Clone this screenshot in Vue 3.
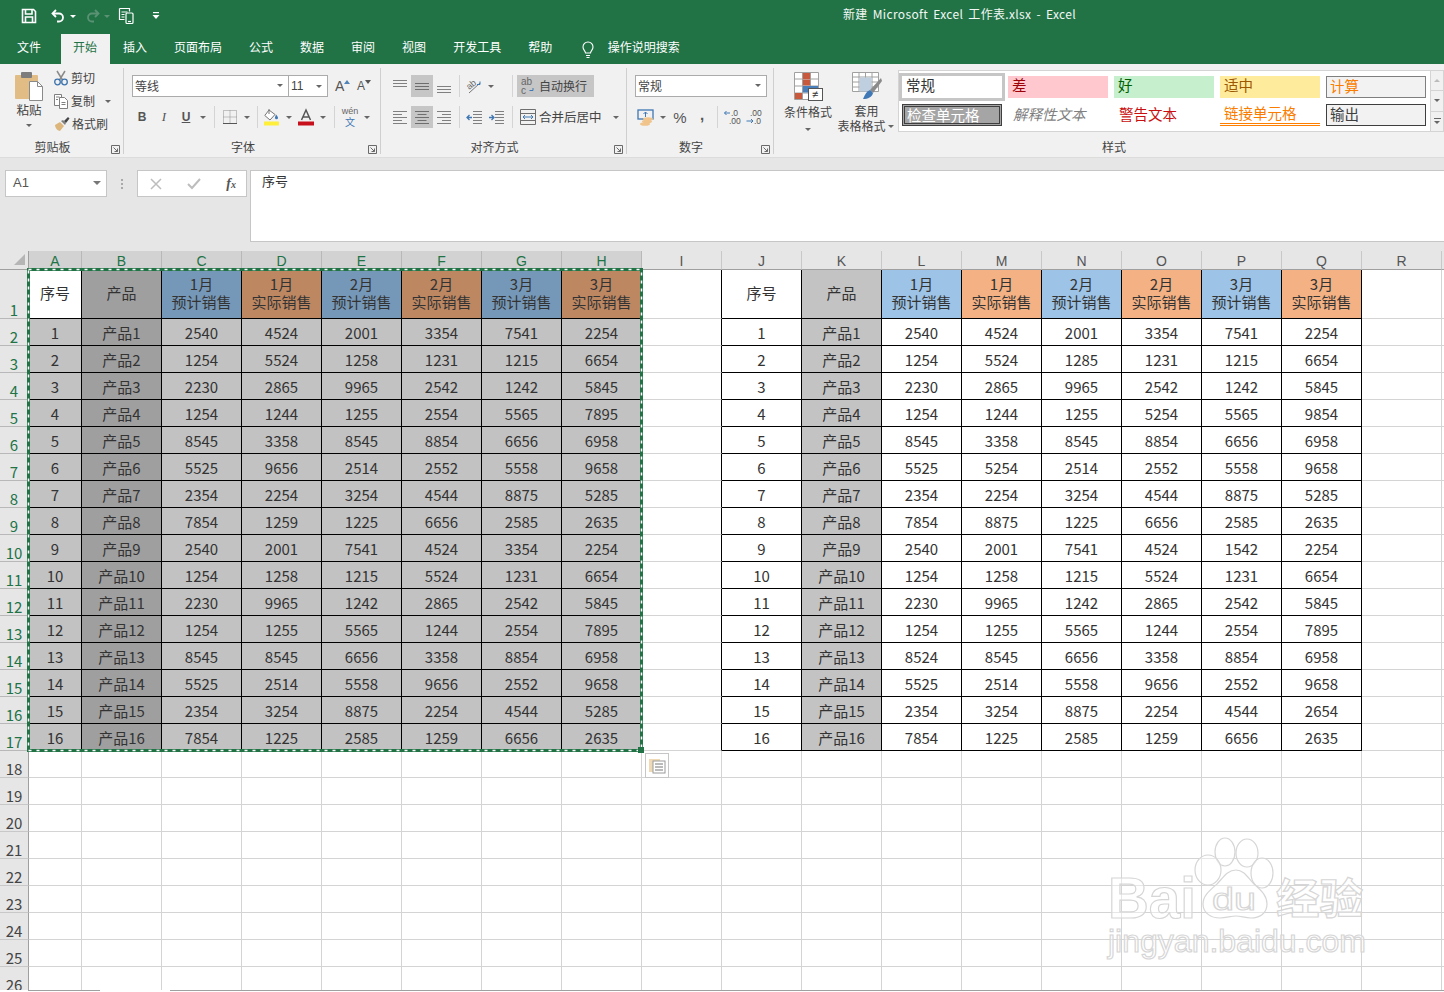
<script setup>
const letters = 'ABCDEFGHIJKLMNOPQR'.split('').concat('')
const left = `2540 4524 2001 3354 7541 2254
1254 5524 1258 1231 1215 6654
2230 2865 9965 2542 1242 5845
1254 1244 1255 2554 5565 7895
8545 3358 8545 8854 6656 6958
5525 9656 2514 2552 5558 9658
2354 2254 3254 4544 8875 5285
7854 1259 1225 6656 2585 2635
2540 2001 7541 4524 3354 2254
1254 1258 1215 5524 1231 6654
2230 9965 1242 2865 2542 5845
1254 1255 5565 1244 2554 7895
8545 8545 6656 3358 8854 6958
5525 2514 5558 9656 2552 9658
2354 3254 8875 2254 4544 5285
7854 1225 2585 1259 6656 2635`.split('\n').map(r => r.split(' '))
const right = `2540 4524 2001 3354 7541 2254
1254 5524 1285 1231 1215 6654
2230 2865 9965 2542 1242 5845
1254 1244 1255 5254 5565 9854
8545 3358 8545 8854 6656 6958
5525 5254 2514 2552 5558 9658
2354 2254 3254 4544 8875 5285
7854 8875 1225 6656 2585 2635
2540 2001 7541 4524 1542 2254
1254 1258 1215 5524 1231 6654
2230 9965 1242 2865 2542 5845
1254 1255 5565 1244 2554 7895
8524 8545 6656 3358 8854 6958
5525 2514 5558 9656 2552 9658
2354 3254 8875 2254 4544 2654
7854 1225 2585 1259 6656 2635`.split('\n').map(r => r.split(' '))
const heads = ['序号', '产品', '1月\n预计销售', '1月\n实际销售', '2月\n预计销售', '2月\n实际销售', '3月\n预计销售', '3月\n实际销售']

function tableCells(data, r) {
  if (r === 1) return heads
  const i = r - 2
  return [String(i + 1), '产品' + (i + 1), ...data[i]]
}
function bg(c, r) {
  if (r > 17) return ''
  if (c < 8) {
    if (r === 1) return c === 0 ? 'w' : c === 1 ? 'lgb' : c % 2 ? 'lorange' : 'lblue'
    return c === 1 ? 'lgb' : 'lg'
  }
  if (c > 8 && c < 17) {
    const k = c - 9
    if (k === 1) return 'rg'
    if (r === 1 && k > 1) return k % 2 ? 'rorange' : 'rblue'
  }
  return ''
}
const rows = Array.from({ length: 26 }, (_, idx) => {
  const n = idx + 1
  const cells = letters.map((_, c) => {
    const inTable = n <= 17 && ((c >= 0 && c < 8) || (c >= 9 && c < 17))
    let text = ''
    if (n <= 17 && c < 8) text = tableCells(left, n)[c]
    if (n <= 17 && c >= 9 && c < 17) text = tableCells(right, n)[c - 9]
    return {
      text,
      cls: [bg(c, n), inTable ? 'blk' : '', n <= 17 && c === 8 ? 'blkr' : '', n === 1 ? 'head' : ''],
    }
  })
  return { n, cells }
})
</script>

<template>
  <div class="page">
    <header class="top">
      <div class="qat">
        <svg class="q-save" width="18" height="18" viewBox="0 0 18 18" fill="none" stroke="#fff" stroke-width="1.6"><path d="M2.500 2.500h11l2 2v11h-13z"/><path d="M5.500 3v4h6.500V3M5.500 15v-5h7v5"/></svg>
        <svg class="q-undo" width="16" height="16" viewBox="0 0 16 16" fill="none" stroke="#fff" stroke-width="1.8"><path d="M6 2 2.500 5.500 6 9"/><path d="M3 5.500h6a4 4 0 0 1 0 8H7"/></svg>
        <span class="tri-w q-c1"></span>
        <svg class="q-redo" width="16" height="16" viewBox="0 0 16 16" fill="none" stroke="#5b9274" stroke-width="1.8"><path d="M10 2l3.500 3.500L10 9"/><path d="M13 5.500H7a4 4 0 0 0 0 8h2"/></svg>
        <span class="tri-d q-c2"></span>
        <svg class="q-prev" width="18" height="18" viewBox="0 0 18 18" fill="none" stroke="#fff" stroke-width="1.2"><path d="M1.500 1.500h10v3M1.500 1.500v11h5M3.500 5h6M3.500 7.500h3M3.500 10h3"/><rect x="8" y="6" width="7" height="10.500" rx="1" fill="#217346"/><path d="M10 14.500h3"/></svg>
        <svg class="q-cust" width="8" height="8" viewBox="0 0 8 8" fill="#fff"><rect x="1" y="0" width="6" height="1.200"/><path d="M0.500 3h7L4 7z"/></svg>
        <span class="title">新建 Microsoft Excel 工作表.xlsx  -  Excel</span>
      </div>
      <nav class="tabs">
        <span class="tab">文件</span>
        <span class="tab active">开始</span>
        <span class="tab">插入</span>
        <span class="tab">页面布局</span>
        <span class="tab">公式</span>
        <span class="tab">数据</span>
        <span class="tab">审阅</span>
        <span class="tab">视图</span>
        <span class="tab">开发工具</span>
        <span class="tab">帮助</span>
        <span class="tell">
          <svg width="16" height="18" viewBox="0 0 16 18" fill="none" stroke="#fff" stroke-width="1.100"><path d="M5.500 12c0-2-2.500-3-2.500-6a5 5 0 0 1 10 0c0 3-2.500 4-2.500 6z"/><path d="M6 14.500h4M6.500 16.500h3"/></svg>
          <span>操作说明搜索</span>
        </span>
      </nav>
    </header>

    <section class="ribbon">
      <!-- 剪贴板 -->
      <div class="group g-clip">
        <div class="body clip-body">
          <div class="paste">
            <svg width="30" height="30" viewBox="0 0 30 30">
              <rect x="1" y="4" width="23" height="24" rx="1" fill="#e1bd85"/>
              <rect x="7" y="1" width="11" height="6" rx="1" fill="#7d7d7d"/>
              <path d="M15.500 10.500h8l5 5v14h-13z" fill="#fff" stroke="#8a8a8a"/>
              <path d="M23.500 10.500v5h5" fill="none" stroke="#8a8a8a"/>
            </svg>
            <span class="paste-t">粘贴</span>
            <span class="tri-g paste-c"></span>
          </div>
          <div class="clip-list">
            <div class="clip-row">
              <svg width="16" height="16" viewBox="0 0 16 16" fill="none"><path d="M4 1l5.500 9M12 1 6.500 10" stroke="#8a8a8a" stroke-width="1.500"/><circle cx="4.500" cy="12" r="2.800" stroke="#3e74ad" stroke-width="1.300"/><circle cx="11.500" cy="12" r="2.800" stroke="#3e74ad" stroke-width="1.300"/></svg>
              <span>剪切</span>
            </div>
            <div class="clip-row">
              <svg width="16" height="16" viewBox="0 0 16 16" fill="#fff" stroke="#7f7f7f"><path d="M1.500 1.500h7v11h-7z"/><path d="M6.500 4.500h5l3 3v8h-8z"/><path d="M8.500 9.500h4M8.500 11.500h4M3 4h3.500M3 6.500h2" fill="none"/></svg>
              <span>复制</span><span class="tri-g copy-c"></span>
            </div>
            <div class="clip-row">
              <svg width="17" height="16" viewBox="0 0 17 16"><path d="M2 9l5-3 4 4-4 5C5 15 2 12 2 9z" fill="#dcb67c"/><path d="M8 5l2-1 3 3-1 2z" fill="#7f7f7f"/><path d="M11 5l4-4 1.500 1.500L13 7z" fill="#444"/></svg>
              <span>格式刷</span>
            </div>
          </div>
        </div>
        <div class="g-label"><span></span><span>剪贴板</span><svg class="launch" width="9" height="9" viewBox="0 0 9 9" fill="none" stroke="#6a6a6a"><path d="M0.500 8.500v-8h8v8z"/><path d="M2.500 2.500l4 4M6.500 3.500v3h-3"/></svg></div>
      </div>

      <!-- 字体 -->
      <div class="group g-font">
        <div class="body font-body">
          <div class="r1 font-r1">
            <div class="field f-name"><span>等线</span><span class="tri-g"></span></div>
            <div class="field f-size"><span>11</span><span class="tri-g"></span></div>
            <span class="grow">A<svg width="6" height="4" viewBox="0 0 6 4"><path d="M0 4h6L3 0z" fill="#4e82b8"/></svg></span>
            <span class="shrink">A<svg width="6" height="4" viewBox="0 0 6 4"><path d="M0 0h6L3 4z" fill="#555"/></svg></span>
          </div>
          <div class="r2 font-r2">
            <span class="ico t-b">B</span>
            <span class="ico t-i">I</span>
            <span class="ico t-u">U</span>
            <span class="cw"><span class="tri-g"></span></span>
            <span class="sep s10"></span>
            <span class="ico"><svg width="16" height="16" viewBox="0 0 16 16" fill="none" stroke="#8f8f8f" stroke-dasharray="1 1"><path d="M1.500 1.500h13v13h-13zM8 1.500v13M1.500 8h13"/><path d="M1 14.500h14" stroke="#555" stroke-dasharray="none"/></svg></span>
            <span class="cw"><span class="tri-g"></span></span>
            <span class="sep s8"></span>
            <span class="ico"><svg width="18" height="18" viewBox="0 0 18 18"><path d="M6 2 1.800 7.500 7 12l5-5.500z" fill="#fff" stroke="#777"/><path d="M6 1v5" stroke="#777"/><path d="M13 6.500c1.300 1.500 2 2.500 2 3.300a1.500 1.500 0 0 1-3 0c0-.8.500-1.800 1-3.300z" fill="#3f78b5"/><rect x="1" y="13.500" width="15" height="4" fill="#ffef3a"/></svg></span>
            <span class="cw"><span class="tri-g"></span></span>
            <span class="ico"><svg width="18" height="18" viewBox="0 0 18 18" fill="none"><path d="M4.500 12 9 2l4.500 10M6 9h6" stroke="#555" stroke-width="1.500"/><rect x="1" y="13.500" width="16" height="4" fill="#c8101c"/></svg></span>
            <span class="cw"><span class="tri-g"></span></span>
            <span class="sep s10"></span>
            <span class="ico wen"><span class="wen-a">wén</span><span class="wen-b">文</span></span>
            <span class="cw"><span class="tri-g"></span></span>
          </div>
        </div>
        <div class="g-label"><span></span><span>字体</span><svg class="launch" width="9" height="9" viewBox="0 0 9 9" fill="none" stroke="#6a6a6a"><path d="M0.500 8.500v-8h8v8z"/><path d="M2.500 2.500l4 4M6.500 3.500v3h-3"/></svg></div>
      </div>

      <!-- 对齐方式 -->
      <div class="group g-align">
        <div class="body align-body">
          <div class="r1 al-r">
            <span class="ico"><svg width="16" height="16" viewBox="0 0 16 16" stroke="#808080"><path d="M1 2.500h14M1 5.500h14M1 8.500h14"/></svg></span>
            <span class="ico on"><svg width="16" height="16" viewBox="0 0 16 16" stroke="#6e6e6e"><path d="M1 5.500h14M1 8.500h14M1 11.500h14"/></svg></span>
            <span class="ico"><svg width="16" height="16" viewBox="0 0 16 16" stroke="#808080"><path d="M1 8.500h14M1 11.500h14M1 14.500h14"/></svg></span>
            <span class="sep s8"></span>
            <span class="ico"><svg width="20" height="18" viewBox="0 0 20 18" fill="none"><text x="3" y="11" transform="rotate(-40 7 9)" class="svg-t">ab</text><path d="M5 16 16 6" stroke="#777"/><path d="M16 4.500v3h-3" stroke="#3f78b5"/></svg></span>
            <span class="cw"><span class="tri-g"></span></span>
            <span class="sp10"></span>
            <span class="sep s10"></span>
            <span class="btn-wrap on">
              <svg width="16" height="20" viewBox="0 0 16 20"><text x="1" y="9" class="svg-t2">ab</text><text x="1" y="18" class="svg-t2">c</text><path d="M13 12v2.500H9.500" fill="none" stroke="#3f78b5"/></svg>
              <span>自动换行</span>
            </span>
          </div>
          <div class="r2 al-r">
            <span class="ico"><svg width="16" height="16" viewBox="0 0 16 16" stroke="#808080"><path d="M1 2.500h14M1 5.500h9M1 8.500h14M1 11.500h9M1 14.500h14"/></svg></span>
            <span class="ico on"><svg width="16" height="16" viewBox="0 0 16 16" stroke="#6e6e6e"><path d="M1 2.500h14M3.500 5.500h9M1 8.500h14M3.500 11.500h9M1 14.500h14"/></svg></span>
            <span class="ico"><svg width="16" height="16" viewBox="0 0 16 16" stroke="#808080"><path d="M1 2.500h14M6 5.500h9M1 8.500h14M6 11.500h9M1 14.500h14"/></svg></span>
            <span class="sep s8"></span>
            <span class="ico"><svg width="17" height="16" viewBox="0 0 17 16" fill="none"><path d="M7 2.500h9M7 5.500h9M7 8.500h9M7 11.500h9M7 14.500h9" stroke="#808080"/><path d="M6 8.500H1M3.500 6 1 8.500 3.500 11" stroke="#3f78b5" stroke-width="1.300"/></svg></span>
            <span class="ico"><svg width="17" height="16" viewBox="0 0 17 16" fill="none"><path d="M7 2.500h9M7 5.500h9M7 8.500h9M7 11.500h9M7 14.500h9" stroke="#808080"/><path d="M1 8.500h5M3.500 6 6 8.500 3.500 11" stroke="#3f78b5" stroke-width="1.300"/></svg></span>
            <span class="sep s10"></span>
            <span class="btn-merge">
              <svg width="16" height="16" viewBox="0 0 16 16" fill="none" stroke="#6e6e6e"><path d="M.5.500h15v15H.500zM.5 4.500h15M.5 11.500h15"/><path d="M3 8h10M5 6 3 8l2 2M11 6l2 2-2 2" stroke="#3f78b5"/></svg>
              <span>合并后居中</span>
              <span class="tri-g merge-c"></span>
            </span>
          </div>
        </div>
        <div class="g-label"><span></span><span>对齐方式</span><svg class="launch" width="9" height="9" viewBox="0 0 9 9" fill="none" stroke="#6a6a6a"><path d="M0.500 8.500v-8h8v8z"/><path d="M2.500 2.500l4 4M6.500 3.500v3h-3"/></svg></div>
      </div>

      <!-- 数字 -->
      <div class="group g-num">
        <div class="body num-body">
          <div class="r1"><div class="field f-fmt"><span>常规</span><span class="tri-g"></span></div></div>
          <div class="r2 num-r2">
            <span class="ico"><svg width="18" height="18" viewBox="0 0 18 18" fill="none"><rect x="1" y="2" width="15" height="9" stroke="#3f78b5" stroke-width="1.300"/><path d="M8.500 4v5M6.500 6 8.500 4l2 2" stroke="#3f78b5"/><ellipse cx="11" cy="11" rx="5" ry="1.800" fill="#f0c48a"/><ellipse cx="10" cy="13.500" rx="5" ry="1.800" fill="#f0c48a"/><ellipse cx="8" cy="16" rx="5" ry="1.800" fill="#f0c48a"/></svg></span>
            <span class="cw"><span class="tri-g"></span></span>
            <span class="ico t-pct">%</span>
            <span class="ico t-com">,</span>
            <span class="sep s8"></span>
            <span class="ico"><svg width="18" height="16" viewBox="0 0 18 16"><text x="8" y="7" class="svg-d">.0</text><text x="6" y="15" class="svg-d">.00</text><path d="M7 4H1.500M3.500 2 1.500 4l2 2" fill="none" stroke="#3f78b5"/></svg></span>
            <span class="ico"><svg width="18" height="16" viewBox="0 0 18 16"><text x="5" y="7" class="svg-d">.00</text><text x="9" y="15" class="svg-d">.0</text><path d="M1.500 12H8M6 10l2 2-2 2" fill="none" stroke="#3f78b5"/></svg></span>
          </div>
        </div>
        <div class="g-label"><span></span><span>数字</span><svg class="launch" width="9" height="9" viewBox="0 0 9 9" fill="none" stroke="#6a6a6a"><path d="M0.500 8.500v-8h8v8z"/><path d="M2.500 2.500l4 4M6.500 3.500v3h-3"/></svg></div>
      </div>

      <!-- 样式 -->
      <div class="group g-style">
        <div class="body style-body">
          <div class="big b-cond">
            <svg width="30" height="30" viewBox="0 0 30 30">
              <path d="M1.500 1.500h24v27h-24zM9.500 1.500v27M17.500 1.500v27M1.500 8h24M1.500 15h24M1.500 22h24" fill="#fff" stroke="#a0a0a0"/>
              <rect x="10" y="2" width="7" height="6" fill="#c8593c"/><rect x="10" y="8.500" width="7" height="6" fill="#c8593c"/>
              <rect x="10" y="15" width="15" height="6.500" fill="#4a7ebb"/><rect x="2" y="22" width="7" height="6" fill="#c8593c"/>
              <rect x="15.500" y="17.500" width="14" height="12" fill="#fff" stroke="#555"/><text x="19" y="27" class="svg-ne">≠</text>
            </svg>
            <span class="big-t b1">条件格式</span>
            <span class="tri-g big-c"></span>
          </div>
          <div class="big b-table">
            <svg width="30" height="30" viewBox="0 0 30 30">
              <path d="M.5 1.500h26v19H.500zM7 1.500v19M13.500 1.500v19M20 1.500v19M.5 6h26M.5 11h26M.5 16h26" fill="#fff" stroke="#a0a0a0"/>
              <rect x="7.500" y="6.500" width="12" height="14" fill="#bfcfe0"/>
              <path d="M29 7 18 19l3 3L30 10z" fill="#8b8b8b"/>
              <path d="M18 19c-3 1-5 4-7 9 5 0 9-2 10-6z" fill="#3f78b5"/>
            </svg>
            <span class="big-t b2">套用</span>
            <span class="big-t b3">表格格式<span class="tri-g b3c"></span></span>
          </div>
          <div class="gallery">
            <div class="g-grid">
              <span class="st st-normal">常规</span>
              <span class="st st-bad">差</span>
              <span class="st st-good">好</span>
              <span class="st st-mid">适中</span>
              <span class="st st-calc">计算</span>
              <span class="st st-check">检查单元格</span>
              <span class="st st-expl">解释性文本</span>
              <span class="st st-warn">警告文本</span>
              <span class="st st-link">链接单元格</span>
              <span class="st st-out">输出</span>
            </div>
            <div class="g-scroll">
              <span class="sb"><i class="up"></i></span>
              <span class="sb"><i class="dn"></i></span>
              <span class="sb sb3"><i class="bar"></i><i class="dn"></i></span>
            </div>
          </div>
        </div>
        <div class="g-label style-label"><span></span><span>样式</span><span></span></div>
      </div>
    </section>

    <section class="fbar">
      <div class="namebox"><span>A1</span><span class="tri-d2"></span></div>
      <div class="dots"><i></i><i></i><i></i></div>
      <div class="fxbox">
        <svg width="12" height="12" viewBox="0 0 12 12" stroke="#bdbdbd" stroke-width="1.500"><path d="M1 1l10 10M11 1 1 11"/></svg>
        <svg width="14" height="12" viewBox="0 0 14 12" fill="none" stroke="#bdbdbd" stroke-width="2"><path d="M1 6l4 4 8-9"/></svg>
        <span class="fx">f<small>x</small></span>
      </div>
      <div class="finput">序号</div>
    </section>

    <section class="sheet">
      <div class="corner"><svg width="12" height="12" viewBox="0 0 12 12"><path d="M0 11 11 0v11z" fill="#b5b5b5"/></svg></div>
      <div v-for="(c, i) in letters" :key="i" class="colh" :class="{ sel: i < 8 }">{{ c }}</div>
      <template v-for="row in rows" :key="row.n">
        <div class="rowh" :class="{ sel: row.n <= 17 }">{{ row.n }}</div>
        <div v-for="(cell, ci) in row.cells" :key="ci" class="cell" :class="cell.cls">{{ cell.text }}</div>
      </template>

      <svg class="ants" width="624" height="492" viewBox="0 0 624 492" fill="none">
        <rect x="3.500" y="3.500" width="613" height="481" stroke="#217346" stroke-width="3"/>
        <rect x="3.500" y="3.500" width="613" height="481" stroke="#fff" stroke-width="1.500" stroke-dasharray="3 5"/>
        <rect x="613" y="481" width="6" height="6" fill="#217346"/>
      </svg>
      <div class="paste-opt">
        <svg width="18" height="18" viewBox="0 0 18 18"><rect x="1" y="2" width="11" height="13" fill="#f0d9b5"/><rect x="5" y="4" width="12" height="12" fill="#fff" stroke="#9a9a9a"/><path d="M7 7h8M7 10h8M7 13h8" stroke="#777"/></svg>
      </div>
    </section>

    <footer class="bottom"><span class="b-a"></span><span class="b-b"></span></footer>

    <svg class="mark" width="280" height="140" viewBox="1100 830 280 140">
      <g fill="#ffffff" fill-opacity="0.45" stroke="#d6d6d6" stroke-width="1.200">
        <text x="1108" y="918" textLength="88" lengthAdjust="spacingAndGlyphs" class="m-bai">Bai</text>
        <ellipse cx="1225" cy="852" rx="10" ry="14"/>
        <ellipse cx="1247" cy="853" rx="11" ry="14"/>
        <ellipse cx="1208" cy="870" rx="13" ry="15"/>
        <ellipse cx="1262" cy="873" rx="11" ry="15"/>
        <path d="M1236 870c8 0 12 8 18 14 8 7 13 12 13 20 0 10-8 14-16 14-6 0-10-2-15-2s-10 2-16 2c-9 0-17-5-17-14 0-8 6-13 14-20 6-6 10-14 19-14z"/>
        <text x="1212" y="910" textLength="44" lengthAdjust="spacingAndGlyphs" class="m-du">du</text>
        <text x="1276" y="914" textLength="87" lengthAdjust="spacingAndGlyphs" class="m-cn">经验</text>
        <text x="1108" y="952" textLength="258" lengthAdjust="spacingAndGlyphs" class="m-url">jingyan.baidu.com</text>
      </g>
    </svg>
  </div>
</template>

<style>
html, body { margin: 0; padding: 0; overflow: hidden; background: #e6e6e6; }
</style>

<style scoped>
.page {
  position: relative; width: 1444px; height: 992px; overflow: hidden;
  display: flex; flex-direction: column; background: #e6e6e6;
  font-family: "Noto Sans CJK SC", "Liberation Sans", sans-serif; color: #444;
}
.top { height: 64px; background: #217346; color: #fff; flex: none; }
.qat { height: 34px; display: flex; align-items: center; padding-left: 20px; position: relative; top: -1px; }
.q-undo { margin-left: 12px; }
.q-c1 { margin-left: 4px; }
.q-redo { margin-left: 9px; }
.q-c2 { margin-left: 3px; }
.q-prev { margin-left: 8px; }
.q-cust { margin-left: 16px; }
.tri-w, .tri-d { width: 0; height: 0; border: 3px solid transparent; border-top: 3px solid #fff; border-bottom: 0; margin-top: 1px; }
.tri-d { border-top-color: #5b9274; }
.title { margin-left: 683px; font-size: 12px; white-space: pre; color: #f2f7f4; word-spacing: 2px; letter-spacing: 0.35px; padding-bottom: 6px; }
.tabs { height: 30px; display: flex; align-items: stretch; gap: 2px; padding-left: 4.500px; font-size: 12px; }
.tab { padding: 0 12.500px 5px; display: flex; align-items: center; height: 30px; box-sizing: border-box; }
.tab.active { background: #f1f1f1; color: #217346; margin-left: 5px; margin-right: -1px; }
.tell { display: flex; align-items: center; gap: 12px; margin-left: 0; padding-left: 13px; padding-bottom: 1px; }
.tell span { padding-bottom: 4px; }
.tell svg { margin-top: 2px; }

.ribbon { height: 94px; flex: none; background: #f1f1f1; display: flex; font-size: 12px; border-bottom: 0; box-shadow: inset 0 -1px 0 #dcdcdc; }
.group { box-sizing: border-box; height: 86px; margin-top: 4px; border-right: 1px solid #cfcfcf; display: flex; flex-direction: column; flex: none; }
.g-clip { width: 124px; }
.g-font { width: 257px; }
.g-align { width: 246px; }
.g-num { width: 147px; }
.g-style { flex: 1; border-right: 0; }
.body { height: 72px; flex: none; box-sizing: border-box; }
.g-label { height: 14px; display: grid; grid-template-columns: 1fr auto 1fr; align-items: center; line-height: 14px; padding-right: 18px; color: #444; }
.launch { justify-self: end; margin-top: 5px; margin-right: -15px; }
.style-label { padding: 0 0 0 10px; }

.tri-g { display: inline-block; width: 0; height: 0; border: 3px solid transparent; border-top: 3px solid #666; border-bottom: 0; flex: none; }

.clip-body { display: flex; padding-left: 13px; }
.paste { width: 32px; display: flex; flex-direction: column; align-items: center; padding-top: 3px; }
.paste-t { line-height: 16px; margin-top: 1px; font-size: 12.500px; }
.paste-c { margin-top: 6px; }
.clip-list { margin-left: 8px; margin-top: -1.500px; }
.clip-row { height: 23px; display: flex; align-items: center; gap: 2px; white-space: nowrap; }
.clip-row span:not(.tri-g) { padding-bottom: 2px; }
.copy-c { margin-left: 8px; }

.font-body { padding: 7px 0 0 8px; }
.r1 { display: flex; height: 22px; align-items: center; }
.r2 { display: flex; height: 22px; align-items: center; margin-top: 9px; }
.field { box-sizing: border-box; height: 22px; background: #fff; border: 1px solid #ababab; display: flex; align-items: center; justify-content: space-between; padding: 0 5px 2px 2px; font-size: 12px; }
.f-name { width: 157px; }
.f-size { width: 40px; margin-left: -1px; font-family: "Liberation Sans", sans-serif; padding-bottom: 0; }
.grow, .shrink { display: flex; font-family: "Liberation Sans", sans-serif; line-height: 22px; color: #555; }
.grow { margin-left: 7px; font-size: 14px; width: 22px; }
.shrink { font-size: 12px; width: 14px; }
.grow svg, .shrink svg { margin-top: 5px; }
.font-r2 { margin-left: -1px; }
.ico { width: 22px; height: 22px; display: flex; align-items: center; justify-content: center; flex: none; font-family: "Liberation Sans", sans-serif; color: #555; }
.cw { width: 12px; height: 22px; display: flex; align-items: center; justify-content: center; flex: none; }
.sep { height: 22px; flex: none; position: relative; display: flex; justify-content: center; }
.sep::before { content: ""; width: 1px; height: 100%; background: #d4d4d4; }
.s10 { width: 10px; }
.s8 { width: 8px; }
.sp10 { width: 10px; flex: none; }
.t-b { font-weight: 700; font-size: 12px; }
.t-i { font-style: italic; font-size: 13px; font-family: "Liberation Serif", serif; }
.t-u { font-size: 12px; font-weight: 700; text-decoration: underline; }
.wen { flex-direction: column; }
.wen-a { font-size: 9px; line-height: 9px; color: #666; }
.wen-b { font-size: 10px; line-height: 11px; color: #3f78b5; font-family: "Noto Sans CJK SC", sans-serif; }

.align-body { padding: 7px 0 0 8px; }
.al-r { margin: 0; }
.al-r.r2 { margin-top: 9px; }
.on { background: #c6c6c6; }
.btn-wrap { box-sizing: border-box; width: 77px; height: 22px; display: flex; align-items: center; gap: 3px; padding-left: 3px; flex: none; white-space: nowrap; }
.btn-wrap span { padding-bottom: 2px; }
.btn-merge { display: flex; align-items: center; gap: 3px; padding-left: 3px; white-space: nowrap; font-size: 12.500px; }
.btn-merge span:not(.tri-g) { padding-bottom: 2px; }
.merge-c { margin-left: 8px; }
.svg-t { font: 9px "Liberation Sans", sans-serif; fill: #666; }
.svg-t2 { font: 10px "Liberation Sans", sans-serif; fill: #666; }
.svg-d { font: 8.500px "Liberation Sans", sans-serif; fill: #555; }
.svg-ne { font: 11px "Liberation Sans", sans-serif; fill: #333; }

.num-body { padding: 7px 0 0 8px; }
.f-fmt { width: 132px; }
.t-pct { font-size: 15px; }
.t-com { font-size: 15px; font-weight: 700; padding-bottom: 6px; box-sizing: border-box; }

.style-body { display: flex; padding-left: 7px; }
.big { display: flex; flex-direction: column; align-items: center; flex: none; white-space: nowrap; padding-top: 3px; box-sizing: border-box; }
.b-cond { width: 54px; }
.b-table { width: 63px; }
.big-t { line-height: 15px; }
.b1 { margin-top: 3px; }
.b2 { margin-top: 2px; }
.b3 { position: relative; line-height: 16px; margin-right: 10px; }
.b3c { position: absolute; left: 51px; top: 7px; }
.big-c { margin-top: 9px; }
.gallery { margin-top: 2px; box-sizing: border-box; width: 546px; height: 62px; display: flex; flex: none; }
.g-grid { box-sizing: border-box; width: 533px; height: 62px; background: #fff; border: 1px solid #d4d4d4; padding: 5px 0 0 3px; display: grid; grid-template-columns: repeat(5, 100px); grid-template-rows: 22px 22px; gap: 6px; }
.st { box-sizing: border-box; display: flex; align-items: center; padding: 0 0 5px 4px; font-size: 14.500px; height: 22px; white-space: nowrap; }
.st-normal { background: #fff; color: #333; outline: 3px solid #c6c6c6; outline-offset: 0; }
.st-bad { background: #ffc7ce; color: #9c0006; }
.st-good { background: #c6efce; color: #006100; }
.st-mid { background: #ffeb9c; color: #9c5700; }
.st-calc { background: #f2f2f2; color: #fa7d00; border: 1px solid #7f7f7f; padding-left: 3px; padding-bottom: 3px; }
.st-check { background: #a5a5a5; color: #fff; border: 3px double #3f3f3f; padding-left: 2px; padding-bottom: 2px; }
.st-expl { color: #7f7f7f; font-style: italic; padding-left: 5px; padding-bottom: 4px; }
.st-warn { color: #c81010; padding-left: 5px; padding-bottom: 4px; }
.st-link { color: #fa7d00; border-bottom: 3px double #ff8001; padding-bottom: 2px; }
.st-out { background: #f2f2f2; color: #3f3f3f; border: 1px solid #3f3f3f; padding-left: 3px; padding-bottom: 3px; }
.g-scroll { width: 13px; height: 62px; display: flex; flex-direction: column; background: #f1f1f1; }
.sb { box-sizing: border-box; flex: 1; border: 1px solid #d4d4d4; border-left: 0; margin-top: -1px; display: flex; flex-direction: column; align-items: center; justify-content: center; gap: 2px; }
.sb:first-child { margin-top: 0; }
.sb i { display: block; }
.up { width: 0; height: 0; border: 3px solid transparent; border-bottom: 3px solid #bbb; border-top: 0; }
.dn { width: 0; height: 0; border: 3px solid transparent; border-top: 3px solid #666; border-bottom: 0; }
.bar { width: 7px; height: 1px; background: #666; }

.fbar { height: 93px; flex: none; box-sizing: border-box; padding-top: 12px; display: flex; align-items: flex-start; }
.namebox { box-sizing: border-box; margin-left: 5px; width: 102px; height: 27px; background: #fff; border: 1px solid #c6c6c6; display: flex; align-items: center; justify-content: space-between; padding: 0 5px 2px 7px; font: 13px "Liberation Sans", sans-serif; color: #555; }
.tri-d2 { width: 0; height: 0; border: 4px solid transparent; border-top: 4px solid #777; border-bottom: 0; }
.dots { width: 30px; height: 27px; display: flex; flex-direction: column; align-items: center; justify-content: center; gap: 2px; }
.dots i { width: 2px; height: 2px; background: #a9a9a9; display: block; }
.fxbox { box-sizing: border-box; width: 110px; height: 27px; background: #fff; border: 1px solid #c6c6c6; display: flex; align-items: center; justify-content: space-between; padding: 0 10px 0 12px; }
.fx { font: italic 700 14px "Liberation Serif", serif; color: #555; }
.fx small { font-size: 10px; }
.finput { box-sizing: border-box; margin-left: 3px; flex: 1; height: 72px; background: #fff; border: 1px solid #c6c6c6; border-right: 0; padding: 0 0 0 11px; font-size: 13px; line-height: 20px; color: #333; }

.sheet {
  position: relative; flex: none; width: 1444px; height: 739px; overflow: hidden; background: #fff;
  display: grid; grid-template-columns: 29px 53px repeat(18, 80px); grid-auto-rows: 27px; grid-template-rows: 19px 49px;
}
.corner { background: #e6e6e6; border-right: 1px solid #9f9f9f; border-bottom: 1px solid #9f9f9f; box-sizing: border-box; display: flex; align-items: flex-end; justify-content: flex-end; padding: 0 2px 3px 0; }
.colh { box-sizing: border-box; background: #e6e6e6; border-right: 1px solid #c8c8c8; border-bottom: 1px solid #9f9f9f; text-align: center; font: 14px/19px "Liberation Sans", sans-serif; color: #555; padding-top: 1px; }
.colh.sel { background: #d2d2d2; color: #217346; border-right-color: #b8b8b8; }
.rowh { box-sizing: border-box; background: #e6e6e6; border-right: 1px solid #9f9f9f; border-bottom: 1px solid #c8c8c8; text-align: center; font: 15px/16px "Noto Sans CJK SC", sans-serif; color: #444; display: flex; align-items: flex-end; justify-content: center; overflow: hidden; }
.rowh.sel { color: #217346; border-bottom-color: #b8b8b8; }
.cell { box-sizing: border-box; border-right: 1px solid #d4d4d4; border-bottom: 1px solid #d4d4d4; display: flex; align-items: center; justify-content: center; text-align: center; white-space: pre-line; font-size: 15px; line-height: 18px; color: #333; padding-top: 2px; }
.cell.head { padding-top: 0; padding-bottom: 2px; }
.blk { border-right-color: #000; border-bottom-color: #000; }
.blkr { border-right-color: #000; }
.w { background: #fff; }
.lg { background: #c2c2c2; }
.lgb { background: #9f9f9f; }
.lblue { background: #7698b8; }
.lorange { background: #bd8762; }
.rg { background: #c3c3c3; }
.rblue { background: #9dc3e6; }
.rorange { background: #f4b183; }

.ants { position: absolute; left: 25px; top: 15px; pointer-events: none; }
.paste-opt { position: absolute; left: 645px; top: 502px; width: 24px; height: 25px; box-sizing: border-box; border: 1px solid #c6c6c6; background: #fff; display: flex; align-items: center; justify-content: center; }

.bottom { height: 2px; flex: none; background: #fff; display: flex; }
.b-a { margin-left: 28px; width: 72px; height: 1px; background: #a0a0a0; }
.b-b { margin-left: 70px; flex: 1; height: 1px; background: #a0a0a0; }

.mark { position: absolute; left: 1100px; top: 830px; pointer-events: none; }
.m-bai { font: 700 58px "Liberation Sans", sans-serif; }
.m-du { font: 400 32px "Liberation Sans", sans-serif; }
.m-cn { font: 700 42px "Noto Sans CJK SC", sans-serif; }
.m-url { font: 400 32px "Liberation Sans", sans-serif; }
</style>
